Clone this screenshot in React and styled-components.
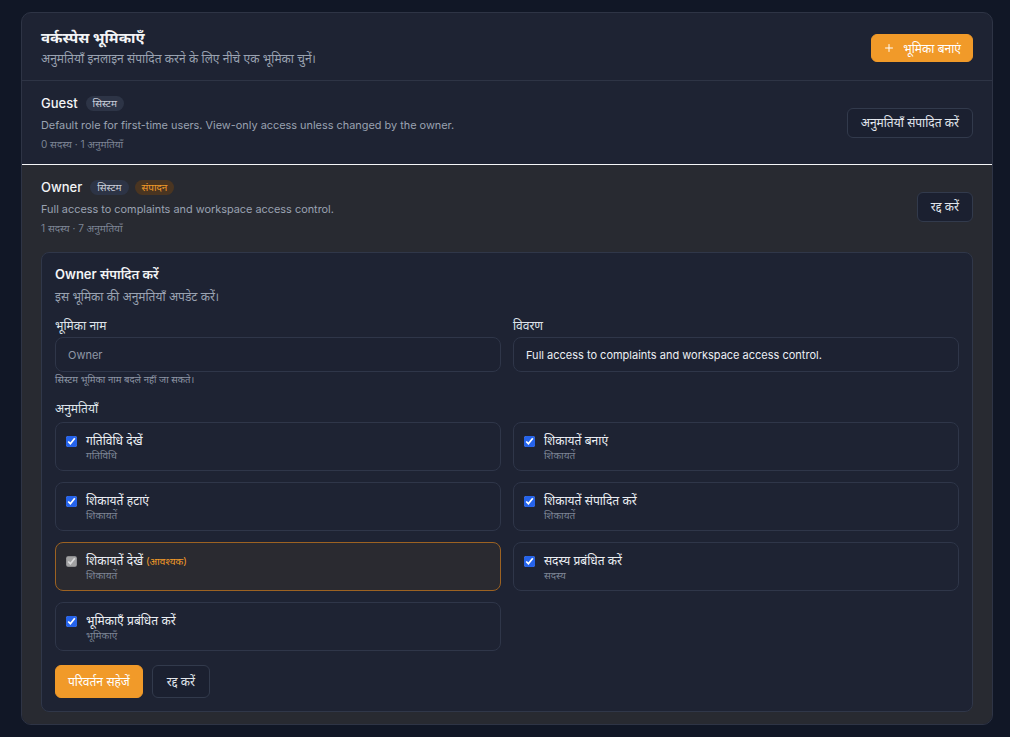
import React, { useState } from 'react';
import styled, { createGlobalStyle } from 'styled-components';

const GlobalStyle = createGlobalStyle`
    html, body {
        margin: 0;
        padding: 0;
        background: #111726;
    }
    body {
        font-family: Inter, "Noto Sans", "Liberation Sans", sans-serif;
        color: #e6e9ef;
        -webkit-font-smoothing: antialiased;
    }
    * { box-sizing: border-box; }
`;

const Page = styled.div`
    padding: 12px 17px 13px 21px;
`;

const Card = styled.section`
    background: #1e2333;
    border: 1px solid #2e3445;
    border-radius: 10px;
    overflow: hidden;
`;

const Header = styled.header`
    display: flex;
    align-items: center;
    justify-content: space-between;
    padding: 15px 19px 12px 19px;
    border-bottom: 1px solid #2e3445;
`;

const Title = styled.h2`
    margin: 0;
    font-size: 15px;
    line-height: 20px;
    font-weight: 700;
    color: #f3f4f6;
`;

const Subtitle = styled.p`
    margin: 2px 0 0;
    font-size: 12px;
    line-height: 18px;
    color: #9aa2b1;
`;

const Button = styled.button`
    display: inline-flex;
    align-items: center;
    gap: 8px;
    height: ${(p) => p.$h || 30}px;
    padding: 0 ${(p) => p.$px || 13}px;
    font-family: inherit;
    font-size: 12px;
    font-weight: 400;
    border-radius: 6px;
    cursor: pointer;
    border: 1px solid ${(p) => (p.$primary ? '#f19a29' : '#323a4c')};
    background: ${(p) => (p.$primary ? '#f19a29' : '#1b2030')};
    color: ${(p) => (p.$primary ? '#ffffff' : '#e2e6ed')};
`;

const RoleRow = styled.div`
    display: flex;
    flex-direction: column;
    padding: 12px 19px 12px;
    background: ${(p) => (p.$active ? '#282a31' : 'transparent')};
    border-top: ${(p) => (p.$active ? '1px solid #f5f6f8' : 'none')};
`;

const RoleTop = styled.div`
    display: flex;
    align-items: center;
    justify-content: space-between;
`;

const NameLine = styled.div`
    display: flex;
    align-items: center;
    gap: 6px;
`;

const RoleName = styled.span`
    font-size: 13px;
    line-height: 20px;
    font-weight: 500;
    color: #f3f4f6;
    margin-right: 2px;
`;

const Badge = styled.span`
    display: inline-flex;
    align-items: center;
    height: 15px;
    padding: 0 7px;
    border-radius: 999px;
    font-size: 10px;
    font-weight: 400;
    background: ${(p) => (p.$tone === 'orange' ? '#4a3521' : '#2d3446')};
    color: ${(p) => (p.$tone === 'orange' ? '#f19a29' : '#c9ceda')};
`;

const RoleDesc = styled.p`
    margin: 3px 0 0;
    font-size: 10.9px;
    line-height: 18px;
    color: #9aa2b1;
`;

const RoleMeta = styled.p`
    margin: 2px 0 0;
    font-size: 10px;
    line-height: 16px;
    color: #7d8595;
`;

const EditPanel = styled.div`
    margin-top: 16px;
    background: #1e2333;
    border: 1px solid #303749;
    border-radius: 8px;
    padding: 11px 13px 13px;
`;

const PanelTitle = styled.h3`
    margin: 0;
    font-size: 13px;
    line-height: 20px;
    font-weight: 600;
    color: #f3f4f6;
`;

const PanelSub = styled.p`
    margin: 4px 0 0;
    font-size: 12px;
    line-height: 18px;
    color: #9aa2b1;
`;

const FieldGrid = styled.div`
    display: grid;
    grid-template-columns: 1fr 1fr;
    gap: 12px;
    margin-top: 11px;
`;

const Field = styled.div`
    display: flex;
    flex-direction: column;
`;

const Label = styled.label`
    font-size: 12px;
    line-height: 18px;
    color: #dfe3ea;
    margin-bottom: ${(p) => p.$mb ?? 2}px;
`;

const Input = styled.input`
    height: 35px;
    width: 100%;
    padding: 0 12px;
    border-radius: 8px;
    border: 1px solid #2f3649;
    background: #1d2232;
    font-family: inherit;
    font-size: 11px;
    color: ${(p) => (p.disabled ? '#8f97a6' : '#eceff4')};
    outline: none;
`;

const Hint = styled.span`
    margin-top: 1px;
    font-size: 9.5px;
    line-height: 14px;
    color: #8f97a6;
`;

const PermSection = styled.div`
    margin-top: 10px;
`;

const PermGrid = styled.div`
    display: grid;
    grid-template-columns: 1fr 1fr;
    gap: 11px 12px;
    margin-top: 4px;
`;

const PermCard = styled.label`
    display: flex;
    align-items: flex-start;
    gap: 9px;
    height: 49px;
    padding: 10px 10px;
    border-radius: 8px;
    border: 1px solid ${(p) => (p.$required ? '#9c6222' : '#2f3649')};
    background: ${(p) => (p.$required ? '#2a2a30' : '#1e2333')};
    cursor: pointer;
`;

const Check = styled.input`
    width: 11px;
    height: 11px;
    margin: 3px 0 0;
    accent-color: #2563eb;
    flex-shrink: 0;
`;

const PermText = styled.div`
    display: flex;
    flex-direction: column;
`;

const PermTitle = styled.span`
    font-size: 12px;
    line-height: 16px;
    font-weight: 400;
    color: #eceff4;
`;

const Required = styled.span`
    margin-left: 3px;
    font-size: 10px;
    color: #f19a29;
`;

const PermGroup = styled.span`
    font-size: 10px;
    line-height: 13px;
    color: #7d8595;
`;

const Actions = styled.div`
    display: flex;
    gap: 9px;
    margin-top: 14px;
`;

const PlusIcon = () => (
    <svg width="12" height="12" viewBox="0 0 24 24" fill="none" stroke="currentColor" strokeWidth="2" strokeLinecap="round">
        <path d="M12 5v14M5 12h14" />
    </svg>
);

const permissions = [
    { key: 'activity.view', title: 'गतिविधि देखें', group: 'गतिविधि' },
    { key: 'complaints.create', title: 'शिकायतें बनाएं', group: 'शिकायतें' },
    { key: 'complaints.delete', title: 'शिकायतें हटाएं', group: 'शिकायतें' },
    { key: 'complaints.edit', title: 'शिकायतें संपादित करें', group: 'शिकायतें' },
    { key: 'complaints.view', title: 'शिकायतें देखें', group: 'शिकायतें', required: true },
    { key: 'members.manage', title: 'सदस्य प्रबंधित करें', group: 'सदस्य' },
    { key: 'roles.manage', title: 'भूमिकाएँ प्रबंधित करें', group: 'भूमिकाएँ' },
];

function App() {
    const [checked, setChecked] = useState(() => permissions.map((p) => p.key));
    const [description, setDescription] = useState('Full access to complaints and workspace access control.');

    const toggle = (key) => {
        setChecked((list) => (list.includes(key) ? list.filter((k) => k !== key) : [...list, key]));
    };

    return (
        <>
            <GlobalStyle />
            <Page>
                <Card>
                    <Header>
                        <div>
                            <Title>वर्कस्पेस भूमिकाएँ</Title>
                            <Subtitle>अनुमतियाँ इनलाइन संपादित करने के लिए नीचे एक भूमिका चुनें।</Subtitle>
                        </div>
                        <Button $primary $h={28} $px={11}>
                            <PlusIcon />
                            भूमिका बनाएं
                        </Button>
                    </Header>

                    <RoleRow>
                        <RoleTop>
                            <div>
                                <NameLine>
                                    <RoleName>Guest</RoleName>
                                    <Badge>सिस्टम</Badge>
                                </NameLine>
                                <RoleDesc>Default role for first-time users. View-only access unless changed by the owner.</RoleDesc>
                                <RoleMeta>0 सदस्य · 1 अनुमतियाँ</RoleMeta>
                            </div>
                            <Button>अनुमतियाँ संपादित करें</Button>
                        </RoleTop>
                    </RoleRow>

                    <RoleRow $active>
                        <RoleTop>
                            <div>
                                <NameLine>
                                    <RoleName>Owner</RoleName>
                                    <Badge>सिस्टम</Badge>
                                    <Badge $tone="orange">संपादन</Badge>
                                </NameLine>
                                <RoleDesc>Full access to complaints and workspace access control.</RoleDesc>
                                <RoleMeta>1 सदस्य · 7 अनुमतियाँ</RoleMeta>
                            </div>
                            <Button>रद्द करें</Button>
                        </RoleTop>

                        <EditPanel>
                            <PanelTitle>Owner संपादित करें</PanelTitle>
                            <PanelSub>इस भूमिका की अनुमतियाँ अपडेट करें।</PanelSub>

                            <FieldGrid>
                                <Field>
                                    <Label>भूमिका नाम</Label>
                                    <Input value="Owner" disabled readOnly />
                                    <Hint>सिस्टम भूमिका नाम बदले नहीं जा सकते।</Hint>
                                </Field>
                                <Field>
                                    <Label>विवरण</Label>
                                    <Input value={description} onChange={(e) => setDescription(e.target.value)} />
                                </Field>
                            </FieldGrid>

                            <PermSection>
                                <Label $mb={0}>अनुमतियाँ</Label>
                                <PermGrid>
                                    {permissions.map((perm) => (
                                        <PermCard key={perm.key} $required={perm.required}>
                                            <Check
                                                type="checkbox"
                                                checked={checked.includes(perm.key)}
                                                disabled={perm.required}
                                                onChange={() => toggle(perm.key)}
                                            />
                                            <PermText>
                                                <PermTitle>
                                                    {perm.title}
                                                    {perm.required && <Required>(आवश्यक)</Required>}
                                                </PermTitle>
                                                <PermGroup>{perm.group}</PermGroup>
                                            </PermText>
                                        </PermCard>
                                    ))}
                                </PermGrid>
                            </PermSection>

                            <Actions>
                                <Button $primary $h={33} $px={12}>परिवर्तन सहेजें</Button>
                                <Button $h={33} $px={14}>रद्द करें</Button>
                            </Actions>
                        </EditPanel>
                    </RoleRow>
                </Card>
            </Page>
        </>
    );
}

export default App;
